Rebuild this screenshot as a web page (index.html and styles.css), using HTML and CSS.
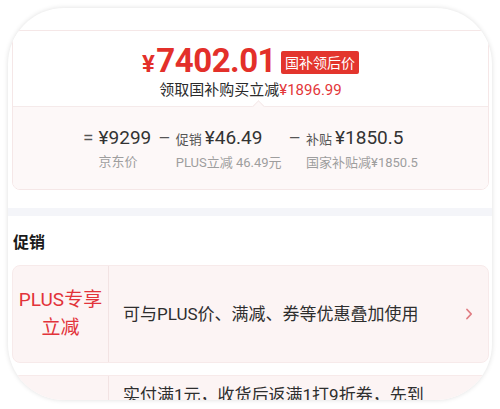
FILE: index.html
```html
<!DOCTYPE html>
<html lang="zh-CN">
<head>
<meta charset="utf-8">
<link rel="stylesheet" href="styles.css">
</head>
<body>
<div class="frame">
  <div class="price-card">
    <div class="price-top">
      <div class="price-row">
        <span class="price"><span class="yen">¥</span>7402.01</span>
        <span class="badge">国补领后价</span>
      </div>
      <div class="sub">领取国补购买立减<span class="red">¥1896.99</span></div>
    </div>
    <div class="breakdown">
      <div class="col">
        <span class="sign">=</span>
        <div class="stack">
          <div class="val">¥9299</div>
          <div class="lbl">京东价</div>
        </div>
      </div>
      <div class="col">
        <span class="sign">–</span>
        <div class="stack">
          <div class="val"><span class="tag">促销</span>¥46.49</div>
          <div class="lbl">PLUS立减 46.49元</div>
        </div>
      </div>
      <div class="col">
        <span class="sign">–</span>
        <div class="stack">
          <div class="val"><span class="tag">补贴</span>¥1850.5</div>
          <div class="lbl">国家补贴减¥1850.5</div>
        </div>
      </div>
    </div>
  </div>
  <div class="band"></div>
  <div class="promo">
    <div class="promo-title">促销</div>
    <div class="promo-row">
      <div class="promo-name">PLUS专享<br>立减</div>
      <div class="promo-desc">可与PLUS价、满减、券等优惠叠加使用</div>
      <svg class="chev" width="8" height="12" viewBox="0 0 8 12"><path d="M2 1.5 L6.2 6 L2 10.5" fill="none" stroke="#e07c82" stroke-width="1.8" stroke-linecap="round" stroke-linejoin="round"/></svg>
    </div>
    <div class="promo-row second">
      <div class="promo-name"></div>
      <div class="promo-desc multi">实付满1元，收货后返满1打9折券，先到先得，数量有限，领完即止</div>
    </div>
  </div>
</div>
</body>
</html>
```
FILE: styles.css
```css
* { box-sizing: border-box; }
html, body { margin: 0; padding: 0; background: #ffffff; }
body {
  width: 500px;
  height: 409px;
  overflow: hidden;
  font-family: Roboto, "Noto Sans CJK SC", sans-serif;
  color: #333333;
}
.frame {
  margin: 8px 8px 0 8px;
  height: 392px;
  border-radius: 56px;
  overflow: hidden;
  background: #ffffff;
  box-shadow: 0 0 5px rgba(0, 0, 0, 0.13);
}
.price-card {
  margin: 22px 3px 0 4px;
  border: 1px solid #f5e7e7;
  border-radius: 8px;
  background: #ffffff;
  overflow: hidden;
}
.price-top {
  padding-top: 13px;
  height: 75px;
  text-align: center;
}
.price-row {
  display: flex;
  justify-content: center;
  align-items: center;
  height: 36px;
}
.price {
  font-family: Roboto, sans-serif;
  font-weight: 700;
  font-size: 33px;
  line-height: 36px;
  color: #e3302a;
  letter-spacing: -0.5px;
}
.yen {
  font-size: 24px;
  margin-right: 2px;
}
.badge {
  margin-left: 5px;
  height: 23px;
  line-height: 23px;
  padding: 0 4px;
  background: #e3352d;
  color: #ffffff;
  font-size: 14px;
  border-radius: 2px;
  font-family: "Noto Sans CJK SC", sans-serif;
}
.sub {
  font-size: 15px;
  line-height: 20px;
  color: #2b2b2b;
}
.red { color: #e3363a; }
.breakdown {
  position: relative;
  border-top: 1px solid #f5eaea;
  background: #fdf8f8;
  padding: 18px 0 15px;
  display: flex;
  justify-content: center;
  gap: 7px;
}
.breakdown::before {
  content: "";
  position: absolute;
  top: -5px;
  left: 241px;
  width: 8px;
  height: 8px;
  background: #fdf8f8;
  border-left: 1px solid #f5eaea;
  border-top: 1px solid #f5eaea;
  transform: rotate(45deg);
}
.col {
  display: flex;
  align-items: flex-start;
}
.sign {
  font-size: 19px;
  line-height: 26px;
  color: #555555;
  margin-right: 5px;
}
.val {
  font-size: 19px;
  line-height: 26px;
  color: #333333;
  white-space: nowrap;
}
.tag {
  font-size: 13px;
  color: #555555;
  margin-right: 3px;
  font-family: "Noto Sans CJK SC", sans-serif;
}
.lbl {
  font-size: 13px;
  line-height: 22px;
  color: #9e9e9e;
  white-space: nowrap;
}
.band {
  margin-top: 18px;
  height: 8px;
  background: #f4f5f9;
}
.promo {
  padding: 16px 3px 0 4px;
}
.promo-title {
  font-size: 16px;
  line-height: 22px;
  font-weight: 700;
  color: #1a1a1a;
  padding-left: 1px;
  margin-bottom: 11px;
}
.promo-row {
  display: flex;
  align-items: center;
  height: 98px;
  background: #fcf4f4;
  border: 1px solid #f7eaea;
  border-radius: 8px;
}
.promo-name {
  width: 96px;
  align-self: stretch;
  display: flex;
  align-items: center;
  justify-content: center;
  text-align: center;
  border-right: 1px solid #f2e3e3;
  color: #e2333a;
  font-size: 19px;
  line-height: 28px;
}
.promo-desc {
  flex: 1;
  padding-left: 14px;
  font-size: 17px;
  line-height: 26px;
  color: #2e2e2e;
}
.chev {
  margin-right: 15px;
}
.promo-row.second {
  margin-top: 12px;
  align-items: flex-start;
  height: 120px;
}
.promo-desc.multi {
  padding-top: 6px;
  padding-right: 55px;
}
```
